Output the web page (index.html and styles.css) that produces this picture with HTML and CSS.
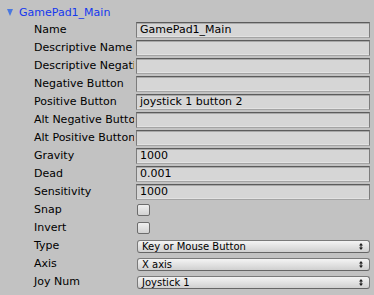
FILE: index.html
```html
<!DOCTYPE html>
<html>
<head>
<meta charset="utf-8">
<link rel="stylesheet" href="styles.css">
</head>
<body>
<div class="panel">
  <div class="header">
    <span class="fold"></span>
    <span class="title">GamePad1_Main</span>
  </div>
  <div class="row"><div class="label">Name</div><div class="field">GamePad1_Main</div></div>
  <div class="row"><div class="label">Descriptive Name</div><div class="field"></div></div>
  <div class="row"><div class="label">Descriptive Negative Name</div><div class="field"></div></div>
  <div class="row"><div class="label">Negative Button</div><div class="field"></div></div>
  <div class="row"><div class="label">Positive Button</div><div class="field">joystick 1 button 2</div></div>
  <div class="row"><div class="label">Alt Negative Button</div><div class="field"></div></div>
  <div class="row"><div class="label">Alt Positive Button</div><div class="field"></div></div>
  <div class="row"><div class="label">Gravity</div><div class="field">1000</div></div>
  <div class="row"><div class="label">Dead</div><div class="field">0.001</div></div>
  <div class="row"><div class="label">Sensitivity</div><div class="field">1000</div></div>
  <div class="row"><div class="label">Snap</div><div class="check"></div></div>
  <div class="row"><div class="label">Invert</div><div class="check"></div></div>
  <div class="row"><div class="label">Type</div><div class="popup"><span>Key or Mouse Button</span><svg class="arrows" width="4" height="7" viewBox="0 0 4 7"><path d="M2 0 L4 2.5 L0 2.5 Z M0 4.5 L4 4.5 L2 7 Z M1.5 2.5 H2.5 V4.5 H1.5 Z" fill="#1e1e1e"/></svg></div></div>
  <div class="row"><div class="label">Axis</div><div class="popup"><span>X axis</span><svg class="arrows" width="4" height="7" viewBox="0 0 4 7"><path d="M2 0 L4 2.5 L0 2.5 Z M0 4.5 L4 4.5 L2 7 Z M1.5 2.5 H2.5 V4.5 H1.5 Z" fill="#1e1e1e"/></svg></div></div>
  <div class="row"><div class="label">Joy Num</div><div class="popup"><span>Joystick 1</span><svg class="arrows" width="4" height="7" viewBox="0 0 4 7"><path d="M2 0 L4 2.5 L0 2.5 Z M0 4.5 L4 4.5 L2 7 Z M1.5 2.5 H2.5 V4.5 H1.5 Z" fill="#1e1e1e"/></svg></div></div>
</div>
</body>
</html>
```
FILE: styles.css
```css
html, body {
  margin: 0;
  padding: 0;
  background: #c2c2c2;
}
.panel {
  width: 374px;
  height: 295px;
  font-family: "DejaVu Sans", sans-serif;
  font-size: 11px;
  color: #000;
}
.header {
  height: 21px;
  display: flex;
  align-items: center;
  padding-left: 7px;
  gap: 6px;
  box-sizing: border-box;
  padding-top: 4px;
}
.fold {
  width: 0;
  height: 0;
  border-left: 3.5px solid transparent;
  border-right: 3.5px solid transparent;
  border-top: 7px solid #4a78e0;
}
.title {
  color: #1538ee;
  line-height: 13px;
}
.row {
  height: 18px;
  display: flex;
  align-items: center;
}
.label {
  width: 100px;
  padding-left: 34px;
  margin-right: 2px;
  white-space: nowrap;
  overflow: hidden;
  line-height: 18px;
}
.field {
  width: 234px;
  height: 16px;
  box-sizing: border-box;
  background: #d6d6d6;
  border-top: 1px solid #5c5c5c;
  border-left: 1px solid #7c7c7c;
  border-right: 1px solid #7c7c7c;
  border-bottom: 1px solid #a4a4a4;
  box-shadow: inset 0 1px 0 #a8a8a8, inset 0 -1px 0 #e2e2e2;
  padding-left: 3px;
  line-height: 14px;
  white-space: nowrap;
}
.check {
  width: 13px;
  height: 12px;
  box-sizing: border-box;
  margin-left: 0.5px;
  border: 1px solid #6c6c6c;
  border-radius: 2px;
  background: linear-gradient(#efefef, #d2d2d2);
}
.popup {
  width: 233px;
  height: 13px;
  margin-left: 1px;
  box-sizing: border-box;
  border: 1px solid #7a7a7a;
  border-bottom-color: #666;
  border-radius: 3px;
  background: linear-gradient(#f4f4f4, #d0d0d0);
  display: flex;
  align-items: center;
  justify-content: space-between;
  padding: 0 6px 0 4px;
  font-size: 10px;
  line-height: 11px;
  white-space: nowrap;
}
.arrows {
  display: block;
  flex: none;
}
```
